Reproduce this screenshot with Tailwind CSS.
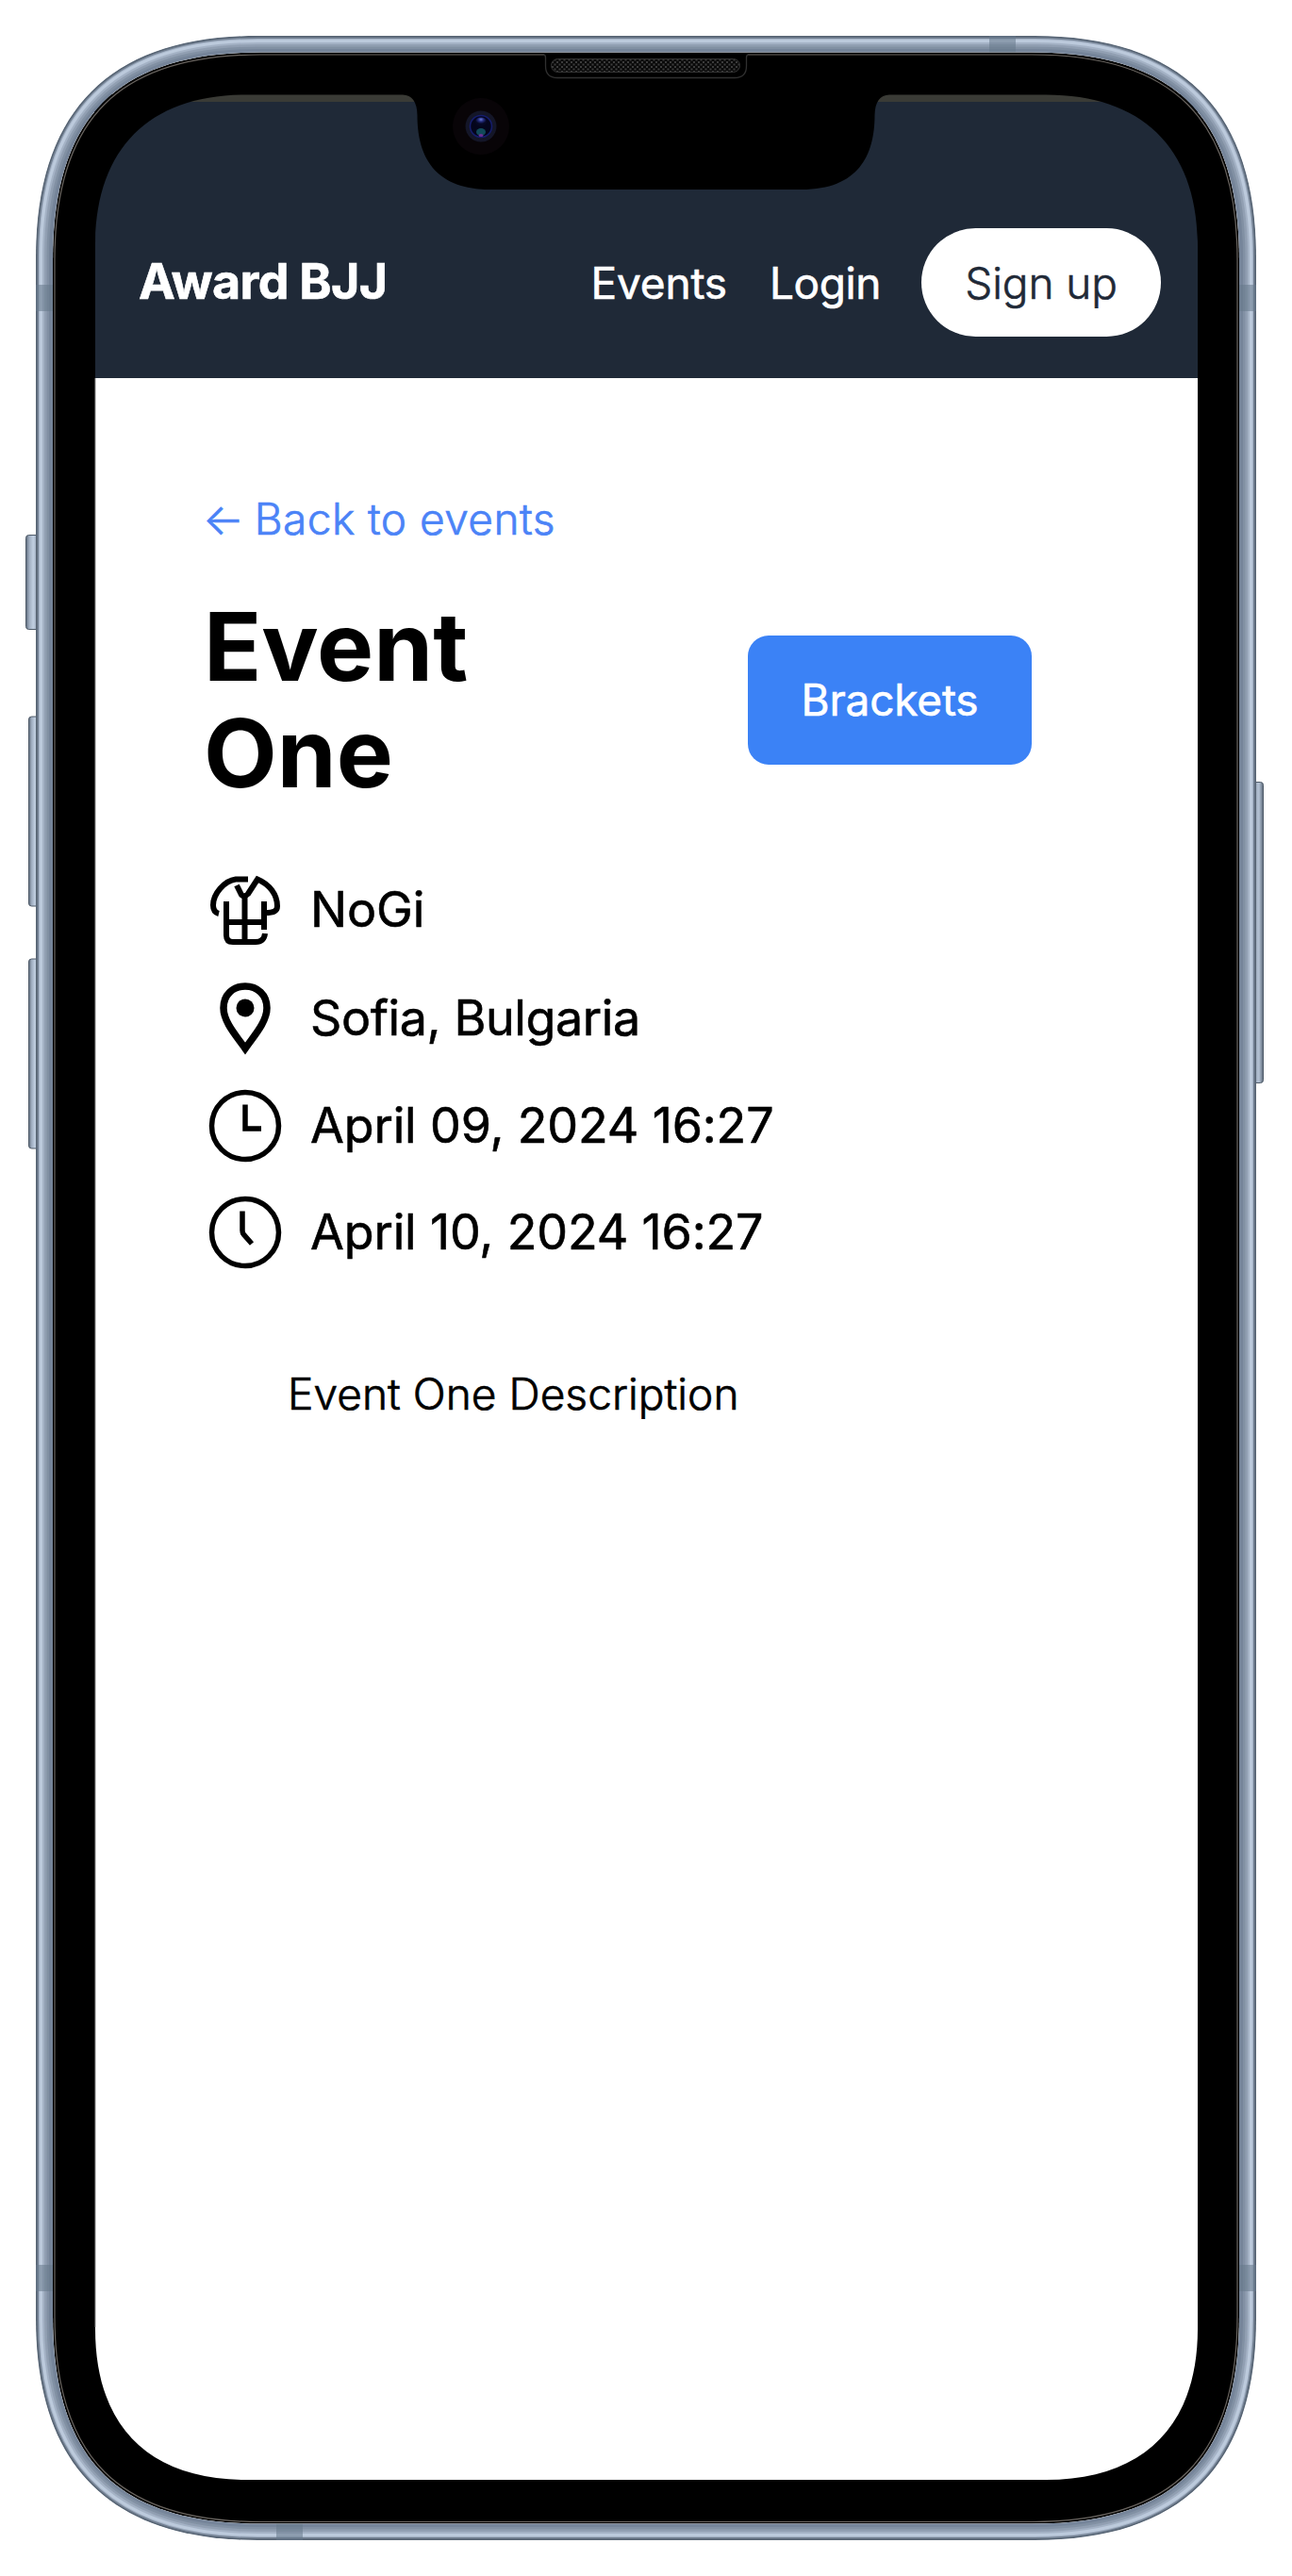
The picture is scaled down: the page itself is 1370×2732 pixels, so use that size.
<!DOCTYPE html>
<html lang="en">
<head>
<meta charset="utf-8">
<title>Award BJJ</title>
<script src="https://cdn.jsdelivr.net/npm/@tailwindcss/browser@4"></script>
</head>
<body class="bg-white">
<div class="relative w-[1370px] h-[2732px] overflow-hidden px-[100px] pt-[100px] font-['Inter',sans-serif] text-black">
  <header class="h-[301px] bg-[#1f2937] border-t-8 border-[#3a3b36] pt-[134px] pl-[47px] pr-[39px] flex items-start justify-between text-white">
    <div class="h-[113px] flex items-center text-[52px] font-bold tracking-[-0.7px] whitespace-nowrap [-webkit-text-stroke:0.6px]">Award BJJ</div>
    <nav class="h-[114px] flex items-center text-[46px] whitespace-nowrap [-webkit-text-stroke:0.6px]">
      <a class="mr-[45px] pt-[2px] tracking-[-0.2px]">Events</a>
      <a class="mr-[43px] pt-[2px] tracking-[-0.4px]">Login</a>
      <a class="w-[254px] h-[115px] pt-[2px] rounded-full bg-white text-[#1f2937] font-light tracking-[-0.1px] flex items-center justify-center">Sign up</a>
    </nav>
  </header>
  <main class="px-[116px] pt-[115px]">
    <a class="block h-[68px] leading-[68px] text-[46px] font-light tracking-[0.45px] text-[#4b83f7] [-webkit-text-stroke:0.7px]"><span class="-ml-[1px] mr-[-3px]">←</span> Back to events</a>
    <div class="mt-[45px] flex items-center justify-between pr-[60px]">
      <h1 class="text-[101px] leading-[113px] font-bold">Event<br>One</h1>
      <a class="w-[301px] h-[137px] rounded-[22px] bg-[#3b82f6] text-white text-[46px] tracking-[-0.2px] flex items-center justify-center [-webkit-text-stroke:0.6px]">Brackets</a>
    </div>
    <ul class="mt-[52px] text-[52px] tracking-[-0.15px] [-webkit-text-stroke:0.6px]">
      <li class="h-[115px] pt-[1px] flex items-center gap-[25px]">
        <svg class="w-[88px] h-[88px] shrink-0" viewBox="216 923 88 88" fill="none" stroke="#000" stroke-width="6">
          <path d="M263 934.500H250C238 936 226 950 226 962C226 967 228 970 232 971"/>
          <path d="M251 941L256 951Q259 954 263 950L273 934.500C286 940 294 951 294 963C294 968 291 970 281 970"/>
          <path d="M240 958V994Q240 1001 247 1001H271Q280 1001 281 992M280 958V988M259.500 952V1000M241 980H280"/>
        </svg>NoGi</li>
      <li class="h-[115px] pt-[1px] tracking-[-0.4px] flex items-center gap-[25px]">
        <svg class="w-[88px] h-[88px] shrink-0" viewBox="216 1036 88 88" fill="none" stroke="#000" stroke-width="7.500">
          <path d="M260 1112C251 1099 237 1084 237 1069C237 1055 247 1046 260 1046S283 1055 283 1069C283 1084 269 1099 260 1112Z"/>
          <circle cx="260" cy="1069" r="9.500" fill="#000" stroke="none"/>
        </svg>Sofia, Bulgaria</li>
      <li class="h-[113px] flex items-center gap-[25px]">
        <svg class="w-[88px] h-[88px] shrink-0" viewBox="216 1150 88 88" fill="none" stroke="#000" stroke-width="5.500">
          <circle cx="260" cy="1194" r="35.500"/><path d="M260 1171.500V1197H277"/>
        </svg>April 09, 2024 16:27</li>
      <li class="h-[113px] flex items-center gap-[25px]">
        <svg class="w-[88px] h-[88px] shrink-0" viewBox="216 1263 88 88" fill="none" stroke="#000" stroke-width="5.500">
          <circle cx="260" cy="1307" r="35.500"/><path d="M257 1284.500V1305Q257 1308 259 1310L267 1319"/>
        </svg>April 10, 2024 16:27</li>
    </ul>
    <p class="mt-[81px] ml-[89px] text-[46px] font-light tracking-[0.05px] [-webkit-text-stroke:0.7px]">Event One Description</p>
  </main>

  <!-- phone frame, laid over the screen -->
  <svg class="absolute inset-0 w-[1370px] h-[2732px]" viewBox="0 0 1370 2732" fill="none">
    <defs>
      <path id="body" d="M273 38H1097C1253 38 1332 117 1332 273V2459C1332 2615 1253 2694 1097 2694H273C117 2694 38 2615 38 2459V273C38 117 117 38 273 38Z"/>
      <path id="inner" d="M276 55.500H1094C1246 55.500 1314 124 1314 276V2456C1314 2608 1246 2676.500 1094 2676.500H276C124 2676.500 56 2608 56 2456V276C56 124 124 55.500 276 55.500Z"/>
      <path id="hole" d="M261 100.500H427Q442 101 442.500 122C442.500 165 460 201 520 201H850C910 201 927.500 165 927.500 122Q928 101 943 100.500H1109C1212 100.500 1270 158 1270 261V2470C1270 2573 1212 2630 1109 2630H261C158 2630 101 2573 101 2470V261C101 158 158 100.500 261 100.500Z"/>
      <clipPath id="bodyClip"><use href="#body"/></clipPath>
      <mask id="metal" maskUnits="userSpaceOnUse" x="0" y="0" width="1370" height="2732">
        <use href="#body" fill="#fff"/><use href="#inner" fill="#000"/>
      </mask>
      <mask id="bezel" maskUnits="userSpaceOnUse" x="0" y="0" width="1370" height="2732">
        <use href="#inner" fill="#fff"/><use href="#hole" fill="#000"/>
      </mask>
      <linearGradient id="btn"><stop offset="0" stop-color="#5c6979"/><stop offset=".25" stop-color="#9eacbf"/><stop offset=".55" stop-color="#c1cfe1"/><stop offset="1" stop-color="#8492a5"/></linearGradient>
      <linearGradient id="btnR"><stop offset="0" stop-color="#8492a5"/><stop offset=".6" stop-color="#b4c2d4"/><stop offset="1" stop-color="#5c6979"/></linearGradient>
      <pattern id="grill" width="5" height="5" patternUnits="userSpaceOnUse"><rect width="5" height="5" fill="#0a0a0a"/><rect width="2" height="2" fill="#3c3c3c"/><rect x="2.500" y="2.500" width="2" height="2" fill="#3c3c3c"/></pattern>
      <radialGradient id="blueLens" cy=".25" r=".5"><stop offset="0" stop-color="#6678d8"/><stop offset=".5" stop-color="#222a78"/><stop offset="1" stop-color="#060824"/></radialGradient>
    </defs>

    <g stroke="#4e5a68">
      <rect x="27.500" y="567.500" width="14" height="100" rx="3" fill="url(#btn)"/>
      <rect x="30.500" y="760" width="12" height="201" rx="3" fill="url(#btn)"/>
      <rect x="30.500" y="1017" width="12" height="201" rx="3" fill="url(#btn)"/>
      <rect x="1328" y="829.500" width="11.500" height="319" rx="3" fill="url(#btnR)"/>
    </g>

    <g mask="url(#metal)">
      <g clip-path="url(#bodyClip)">
        <use href="#body" fill="#76859a"/>
        <use href="#body" stroke="#8190a3" stroke-width="28"/>
        <use href="#body" stroke="#919fb2" stroke-width="23"/>
        <use href="#body" stroke="#a4b2c5" stroke-width="18"/>
        <use href="#body" stroke="#bccadc" stroke-width="14"/>
        <use href="#body" stroke="#a5b3c6" stroke-width="8"/>
        <use href="#body" stroke="#748294" stroke-width="6"/>
        <use href="#body" stroke="#566372" stroke-width="3"/>
        <g fill="#66798a" fill-opacity=".55">
          <path d="M38 302h18v28H38zM1314 302h18v28h-18zM38 2402h18v28H38zM1314 2402h18v28h-18zM1049 38h28v18h-28zM293 2676h28v18h-28z"/>
        </g>
      </g>
    </g>
    <use href="#inner" fill="#000" mask="url(#bezel)"/>
    <path d="M276 58H1094C1244 58 1312 126 1312 276V2456C1312 2606 1244 2674.500 1094 2674.500H276C126 2674.500 58 2606 58 2456V276C58 126 126 58 276 58Z" stroke="#69645f" stroke-width="1.200"/>
    <path d="M101 401V2468" stroke="#8d8d8d" stroke-width="1"/>

    <!-- earpiece -->
    <path d="M577 56H793V70Q793 83 780 83H590Q577 83 577 70Z" fill="#000"/>
    <path d="M576 58Q578.500 58 578.500 61V70Q578.500 82.500 591 82.500H779Q791.500 82.500 791.500 70V61Q791.500 58 794 58" stroke="#303030" stroke-width="1.300"/>
    <rect x="584.500" y="62.500" width="200" height="14" rx="7" fill="url(#grill)" stroke="#333"/>

    <!-- front camera -->
    <circle cx="510" cy="134" r="30" fill="#080407"/>
    <circle cx="510" cy="134" r="16.500" fill="#141628"/>
    <circle cx="510" cy="134" r="11.500" fill="#04051c" stroke="#151d6c" stroke-width="1.500"/>
    <ellipse cx="510" cy="129" rx="6" ry="4.500" fill="url(#blueLens)"/>
    <ellipse cx="510" cy="140" rx="5" ry="4" fill="#124a5a"/>
    <ellipse cx="510" cy="143.500" rx="2.500" ry="1.500" fill="#6b2f94"/>
  </svg>
</div>
</body>
</html>
